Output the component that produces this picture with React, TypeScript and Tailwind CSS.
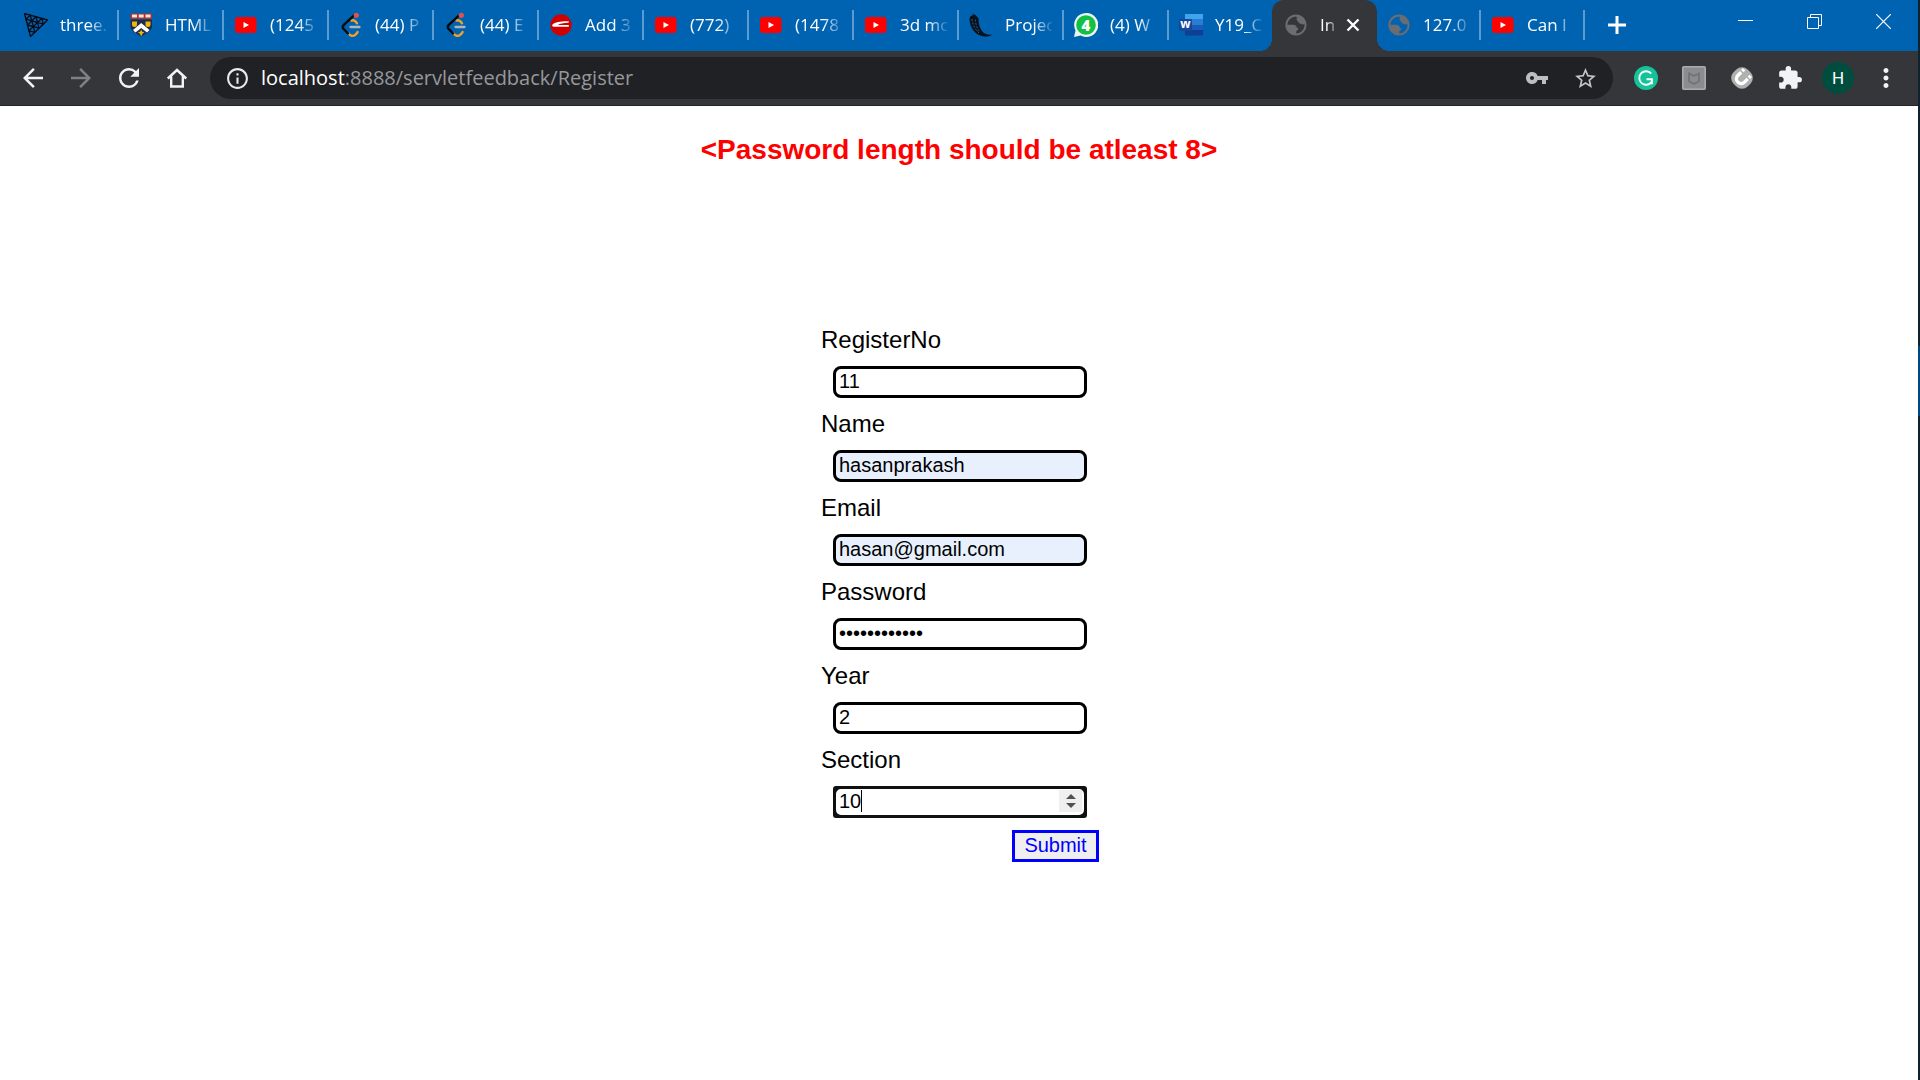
import type { ReactNode } from "react";
import {
  MdArrowBack,
  MdArrowForward,
  MdExtension,
  MdInfoOutline,
  MdMoreVert,
  MdRefresh,
  MdStarBorder,
  MdVpnKey,
} from "react-icons/md";

function ThreeIcon() {
  return (
    <svg viewBox="0 0 24 24" className="size-6" fill="none" stroke="#0b0b14" strokeWidth="1.3" strokeLinejoin="round">
      <path d="M0.500 0.500 23.500 7 6.500 23.500Z" />
      <path d="M12 3.800 3.500 12 15 15.200Z" />
      <path d="M6.200 2.100 2 6.200 7.800 7.900ZM17.800 5.400 13.500 9.500 19.200 11.200ZM5 17.800 10.800 19.400 9.300 13.600ZM7.800 7.900 13.500 9.500 9.300 13.600Z" />
    </svg>
  );
}

function ShieldIcon() {
  return (
    <svg viewBox="0 0 24 24" className="size-6">
      <path d="M1.500 0.500h21.500v5.500h-21.500z" fill="#b3312b" />
      <path d="M3 1.500h5v3H3zM9.700 1.500h5v3h-5zM16.500 1.500h5v3h-5z" fill="#f4e6d8" />
      <path d="M1.500 6.500h21.500V13c0 5-5 7-10.700 10.500C6.500 20 1.500 18 1.500 13z" fill="#1d2b4e" />
      <path d="M3 8.500h5v3a2.500 2.500 0 0 1-5 0zM16.500 8.500h5v3a2.500 2.500 0 0 1-5 0z" fill="#e8b80e" />
      <path d="M12.200 10 20.500 17l-2.500 2.500-5.800-4.500-5.700 4.500L4 17z" fill="#fff" />
      <path d="m12.200 16.500 1 2.200 2.500.3-2 1.600-1.500 2.600-1.500-2.600-2-1.600 2.500-.3z" fill="#e8b80e" />
    </svg>
  );
}

function YouTubeIcon() {
  return (
    <svg viewBox="0 0 24 24" className="size-6">
      <rect x="1" y="4" width="21.500" height="16" rx="3" fill="#f00" />
      <path d="M9.500 9v6l5.500-3z" fill="#fff" />
    </svg>
  );
}

function LeetIcon() {
  return (
    <svg viewBox="0 0 24 24" className="size-6 overflow-visible" fill="none" strokeLinecap="round">
      <path d="M12.500 7.500c2-.6 3.800.2 5.500 2.800M9.500 20.500c1.500 2.500 4.500 3 6.500 1.500 1.200-1 2-1.800 2.600-3" stroke="#f0a12d" strokeWidth="2.400" />
      <path d="M14.500 2.800 4.800 11.800c-1.300 1.300-1.300 2.700-.3 4L9 20.500" stroke="#0a0a0a" strokeWidth="2.400" />
      <path d="M11.500 14h9" stroke="#b3b3b3" strokeWidth="2.300" />
      <circle cx="17.300" cy="2.300" r="2.600" fill="#d9534f" />
    </svg>
  );
}

function RedDiscIcon() {
  return (
    <svg viewBox="0 0 24 24" className="size-6">
      <circle cx="12" cy="12" r="10.700" fill="#d00000" />
      <path d="M3.500 11.500C6 9 13 8 20 8.300l-.5 1.400c-5 .2-9 .8-10.500 2.300h10.800v1.800H5c-1.500 0-2.200-1-1.500-2.300z" fill="#fff" />
    </svg>
  );
}

function PepperIcon() {
  return (
    <svg viewBox="0 0 24 24" className="size-6">
      <path
        d="M3.500 0.300 4 2.200C1.500 2.700.3 4 .5 6.500c.2 7.500 5.500 16 14.500 17 3.500.4 6.500-.6 8.500-2-5 .6-8-.2-10.500-3.500-2.600-3.600-3.500-7.500-3.500-12.500L6.500 2 5 1.600z"
        fill="#08121c"
      />
      <path d="M3 6c.3 5 3 10.500 7 14M6.300 6.500c.2 4 1.200 8 4 12" fill="none" stroke="#2f5f8f" strokeWidth="0.900" strokeDasharray="2 1.500" />
    </svg>
  );
}

function ChatIcon() {
  return (
    <span className="relative grid size-6 place-items-center">
      <svg viewBox="0 0 24 24" className="absolute inset-0 size-6">
        <path d="M12 0a12 12 0 1 1-5.500 22.500L0 24l1.500-6.500A12 12 0 0 1 12 0z" fill="#e9f7ee" />
        <circle cx="12" cy="12" r="9.800" fill="#12c143" />
      </svg>
      <span className="relative font-['Open_Sans',sans-serif] text-[15px] leading-none font-extrabold text-white">4</span>
    </span>
  );
}

function WordIcon() {
  return (
    <span className="relative block size-6">
      <svg viewBox="0 0 24 24" className="absolute inset-0 size-6">
        <path d="M6 1h18v5.500H6z" fill="#41a5ee" />
        <path d="M6 6.500h18V12H6z" fill="#2b7cd3" />
        <path d="M6 12h18v5H6z" fill="#185abd" />
        <path d="M6 17h18v5.500H6z" fill="#103f91" />
        <rect x="0" y="6" width="13" height="12" rx="1" fill="#17479b" />
      </svg>
      <span className="absolute top-[5px] left-[1px] w-[11px] text-center font-['Open_Sans',sans-serif] text-[12px] leading-[12px] font-bold text-white">w</span>
    </span>
  );
}

function GlobeIcon() {
  return (
    <svg viewBox="0 0 24 24" className="size-6 shrink-0" fill="none" stroke="#6b6d71">
      <circle cx="12" cy="12" r="9.600" strokeWidth="2" />
      <path d="M12.500 3.500c1.500 1-.5 3 1 4.300 1.300 1 1.200 2.700 3.500 3 1.500.2 2.500.5 4 .2C21 6 17 2.500 12.500 3z" fill="#6b6d71" strokeWidth="0.500" />
      <path d="M3 12h6c2.500 0 3.500 1 3.500 2.800 1.800.2 2 1.200 1 2.200-1.500.5-1.500 1.500-1.500 4C7 21 3 17 3 12z" fill="#6b6d71" strokeWidth="0.500" />
    </svg>
  );
}

type TabInfo = { title: string; icon: ReactNode };

const leftTabs: TabInfo[] = [
  { title: "three.", icon: <ThreeIcon /> },
  { title: "HTML", icon: <ShieldIcon /> },
  { title: "(1245", icon: <YouTubeIcon /> },
  { title: "(44) P", icon: <LeetIcon /> },
  { title: "(44) E", icon: <LeetIcon /> },
  { title: "Add 3", icon: <RedDiscIcon /> },
  { title: "(772)", icon: <YouTubeIcon /> },
  { title: "(1478", icon: <YouTubeIcon /> },
  { title: "3d mo", icon: <YouTubeIcon /> },
  { title: "Projec", icon: <PepperIcon /> },
  { title: "(4) W", icon: <ChatIcon /> },
  { title: "Y19_C", icon: <WordIcon /> },
];

const rightTabs: TabInfo[] = [
  { title: "127.0", icon: <GlobeIcon /> },
  { title: "Can I", icon: <YouTubeIcon /> },
];

function Tab({ tab, divider, narrow }: { tab: TabInfo; divider: boolean; narrow?: boolean }) {
  return (
    <button
      type="button"
      className={`flex h-[50px] min-w-0 items-center pl-[10px] ${narrow ? "w-[104px]" : "w-[105px]"}`}
    >
      <span className="shrink-0">{tab.icon}</span>
      <span className="ml-3 min-w-0 flex-1 overflow-hidden text-left whitespace-nowrap [mask-image:linear-gradient(to_right,black_60%,transparent_105%)]">
        {tab.title}
      </span>
      <span className={`ml-[10px] h-[30px] w-[2px] shrink-0 ${divider ? "bg-[#5c9bd0]" : ""}`} />
    </button>
  );
}

function TabStrip() {
  return (
    <div className="flex h-[51px] items-start bg-[#0063b1] pl-[14px] font-['Open_Sans','Noto_Sans',sans-serif] text-[17px] text-white">
      {leftTabs.map((tab, i) => (
        <Tab key={tab.title} tab={tab} divider={i < leftTabs.length - 1} />
      ))}
      <div className="relative -ml-[2px] flex h-[51px] w-[105px] items-center rounded-t-xl bg-[#35363a] pb-px pl-3">
        <span className="absolute bottom-0 -left-3 size-3 bg-[radial-gradient(circle_at_0_0,transparent_12px,#35363a_12px)]" />
        <span className="absolute -right-3 bottom-0 size-3 bg-[radial-gradient(circle_at_100%_0,transparent_12px,#35363a_12px)]" />
        <GlobeIcon />
        <span className="ml-3 w-[16px] whitespace-nowrap [mask-image:linear-gradient(to_right,black_40%,transparent_120%)]">In</span>
        <button type="button" aria-label="Close tab" className="ml-[10px]">
          <svg viewBox="0 0 14 14" className="size-[14px]" stroke="#fff" strokeWidth="2.400">
            <path d="M1.500 1.500l11 11M12.500 1.500l-11 11" />
          </svg>
        </button>
      </div>
      {rightTabs.map((tab) => (
        <Tab key={tab.title} tab={tab} divider narrow />
      ))}
      <button type="button" aria-label="New tab" className="ml-[23px] flex h-[50px] items-center">
        <svg viewBox="0 0 18 18" className="size-[18px]" stroke="#fff" strokeWidth="3">
          <path d="M9 0v18M0 9h18" />
        </svg>
      </button>
      <div className="ml-auto flex h-[43px]">
        <button type="button" aria-label="Minimize" className="grid w-[69px] place-items-center">
          <svg viewBox="0 0 15 15" className="size-[15px]" stroke="#fff">
            <path d="M0 6.500h15" />
          </svg>
        </button>
        <button type="button" aria-label="Restore" className="grid w-[69px] place-items-center">
          <svg viewBox="0 0 15 15" className="size-[15px]" fill="none" stroke="#fff">
            <path d="M0.500 3.500h11v11h-11zM3.500 3.500v-3h11v11h-3" />
          </svg>
        </button>
        <button type="button" aria-label="Close" className="grid w-[69px] place-items-center">
          <svg viewBox="0 0 15 15" className="size-[15px]" stroke="#fff" strokeWidth="1.200">
            <path d="M0 0l15 15M15 0L0 15" />
          </svg>
        </button>
      </div>
    </div>
  );
}

function ToolButton({ label, children }: { label: string; children: ReactNode }) {
  return (
    <button type="button" aria-label={label} className="grid h-12 w-12 shrink-0 place-items-center text-[#f1f3f4]">
      {children}
    </button>
  );
}

function Toolbar() {
  return (
    <div className="flex h-[55px] items-center border-b border-[#222327] bg-[#35363a] pr-2 pl-[9px]">
      <ToolButton label="Back">
        <MdArrowBack size={30} />
      </ToolButton>
      <ToolButton label="Forward">
        <MdArrowForward size={30} className="text-[#808185]" />
      </ToolButton>
      <ToolButton label="Reload">
        <MdRefresh size={30} />
      </ToolButton>
      <ToolButton label="Home">
        <svg viewBox="0 0 20 20" className="size-5" fill="none" stroke="currentColor" strokeWidth="2.400">
          <path d="M0.800 10.500 10 2l9.200 8.500M4.200 8.500v10h11.600v-10" />
        </svg>
      </ToolButton>
      <div className="mx-[9px] flex h-[42px] min-w-0 flex-1 items-center rounded-full bg-[#202124] px-[15px]">
        <MdInfoOutline size={25} className="shrink-0 text-[#e8eaed]" />
        <div className="ml-[11px] min-w-0 flex-1 font-['Open_Sans','Noto_Sans',sans-serif] text-[20px] leading-7 whitespace-nowrap text-[#96989c]">
          <span className="text-white">localhost</span>:8888/servletfeedback/Register
        </div>
        <button type="button" aria-label="Saved passwords" className="text-[#bdbec0]">
          <MdVpnKey size={24} />
        </button>
        <button type="button" aria-label="Bookmark" className="ml-6 text-[#c4c5c7]">
          <MdStarBorder size={25} />
        </button>
      </div>
      <ToolButton label="Writing assistant">
        <svg viewBox="0 0 24 24" className="size-6" fill="none" stroke="#fff" strokeWidth="1.900">
          <circle cx="12" cy="12" r="12" fill="#15c39a" stroke="none" />
          <path d="M17.200 7.500a6.800 6.800 0 1 0 .3 8.600" />
          <path d="M12.500 13.200h5.400v5" />
        </svg>
      </ToolButton>
      <ToolButton label="Site advisor">
        <svg viewBox="0 0 24 24" className="size-6" fill="none">
          <rect x="0.800" y="0.800" width="22.400" height="22.400" rx="1" fill="#8b8c8e" stroke="#a3adb3" strokeWidth="1.600" />
          <path d="M7 7.500l5 2.500 5-2.500v8L12 18l-5-2.500z" stroke="#737579" strokeWidth="2" />
        </svg>
      </ToolButton>
      <ToolButton label="Downloader">
        <svg viewBox="0 0 24 24" className="size-6" fill="none">
          <rect x="2" y="2" width="20" height="20" rx="8" fill="#b0b0b0" transform="rotate(45 12 12)" />
          <g transform="rotate(45 12 12)" stroke="#fff" strokeWidth="3.400">
            <path d="M7.300 8.500v4.700a4.700 4.700 0 0 0 9.400 0V8.500" />
            <path d="M7.300 4.300v2.700M16.700 4.300v2.700" />
          </g>
        </svg>
      </ToolButton>
      <ToolButton label="Extensions">
        <MdExtension size={26} />
      </ToolButton>
      <ToolButton label="Profile">
        <span className="grid size-8 place-items-center rounded-full bg-[#004d40] font-[Roboto,sans-serif] text-[17px] leading-none text-white">
          H
        </span>
      </ToolButton>
      <ToolButton label="Menu">
        <MdMoreVert size={30} />
      </ToolButton>
    </div>
  );
}

const fields = [
  { id: "registerNo", label: "RegisterNo", type: "text", value: "11", filled: false },
  { id: "name", label: "Name", type: "text", value: "hasanprakash", filled: true },
  { id: "email", label: "Email", type: "text", value: "hasan@gmail.com", filled: true },
  { id: "password", label: "Password", type: "password", value: "hasanprakash", filled: false },
  { id: "year", label: "Year", type: "text", value: "2", filled: false },
];

function RegisterForm() {
  return (
    <form className="mx-auto mt-[160px] flex w-[280px] flex-col pl-[2px]" onSubmit={(e) => e.preventDefault()}>
      {fields.map((f) => (
        <div key={f.id} className="mb-[10px] flex flex-col">
          <label htmlFor={f.id} className="text-[24px] leading-7">
            {f.label}
          </label>
          <input
            id={f.id}
            type={f.type}
            defaultValue={f.value}
            className={`mx-3 mt-3 mb-px h-8 rounded-lg border-3 border-black px-[3px] pb-[2px] text-[20px] leading-6 ${f.filled ? "bg-[#e8f0fe]" : "bg-white"}`}
          />
          <span className="h-px" />
        </div>
      ))}
      <label htmlFor="section" className="text-[24px] leading-7">
        Section
      </label>
      <div className="relative mx-3 mt-3 flex h-8 rounded-[3px] bg-[#101010]">
        <input
          id="section"
          type="number"
          defaultValue="10"
          className="h-8 w-full [appearance:textfield] rounded-lg border-3 border-[#101010] bg-white px-[3px] pb-[2px] text-[20px] leading-6"
        />
        <span className="absolute top-1 left-[28px] h-[22px] w-px bg-black" />
        <span className="absolute top-1 right-[5px] flex h-[22px] w-[23px] flex-col items-center justify-center gap-1 bg-[#efefef]">
          <button type="button" aria-label="Increase" className="block">
            <svg viewBox="0 0 10 5" className="h-[5px] w-[10px]" fill="#505050">
              <path d="M0 5 5 0l5 5z" />
            </svg>
          </button>
          <button type="button" aria-label="Decrease" className="block">
            <svg viewBox="0 0 10 5" className="h-[5px] w-[10px]" fill="#505050">
              <path d="M0 0l5 5 5-5z" />
            </svg>
          </button>
        </span>
      </div>
      <button
        type="submit"
        className="mt-3 h-8 w-[87px] self-end border-3 border-[#0000ff] bg-[#efefef] pb-[3px] text-[20px] leading-6 text-[#0000ff]"
      >
        Submit
      </button>
    </form>
  );
}

export default function App() {
  return (
    <div className="flex min-h-screen bg-white">
      <div className="flex min-w-0 flex-1 flex-col">
        <header>
          <TabStrip />
          <Toolbar />
        </header>
        <main className="flex-1 font-['Liberation_Sans',Arial,sans-serif] text-black">
          <h1 className="mt-[28px] text-center text-[28px] leading-8 font-bold text-[#ff0000]">
            {"<Password length should be atleast 8>"}
          </h1>
          <RegisterForm />
        </main>
      </div>
      <div className="flex w-[2px] flex-col bg-[#10222e]">
        <div className="mt-[346px] h-[70px] bg-[#00477d]" />
      </div>
    </div>
  );
}
